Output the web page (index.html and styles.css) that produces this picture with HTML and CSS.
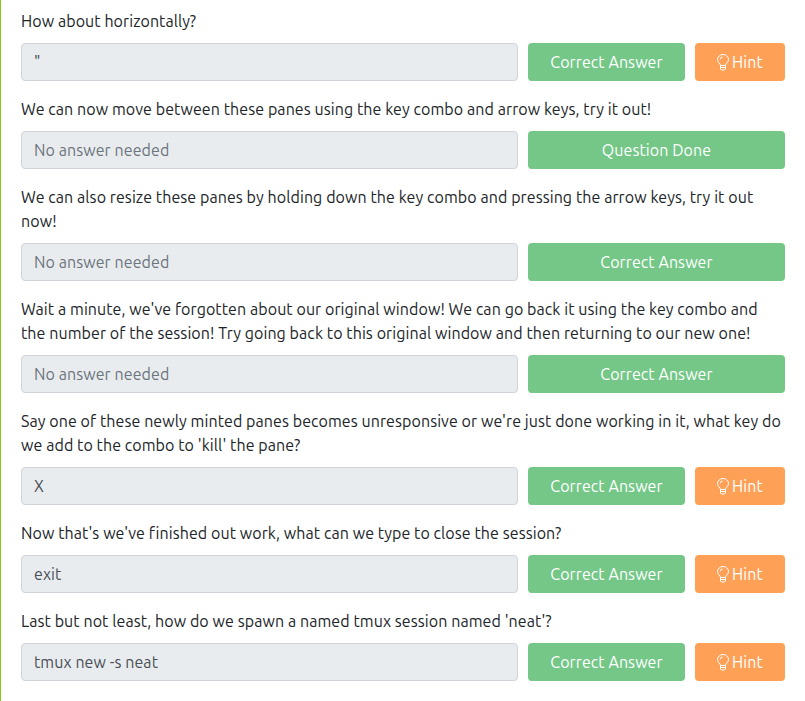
FILE: index.html
```
<!DOCTYPE html>
<html lang="en">
<head>
    <meta charset="UTF-8">
    <meta name="viewport" content="width=device-width, initial-scale=1.0">
    <title>tmux</title>
    <link rel="stylesheet" href="styles.css">
</head>
<body>
    <!-- Shared lightbulb icon -->
    <svg class="icon-defs" width="0" height="0">
        <symbol id="bulb" viewBox="0 0 12 17">
            <path d="M3.5 11.5C3.5 9.4.5 8.4.5 5.5a5.5 5 0 0 1 11 0c0 2.900-3 3.900-3 6z"/>
            <path d="M3 5.5a2.900 2.500 0 0 1 2.900-2.500M3.500 13.500h5M3.500 11.500v3.500l1 1h3l1-1v-3.500"/>
        </symbol>
    </svg>

    <div class="task">
        <div class="question">
            <p class="question-text">How about horizontally?</p>
            <div class="answer-row">
                <input type="text" class="answer" value='"' disabled>
                <button class="btn btn-correct">Correct Answer</button>
                <button class="btn btn-hint"><svg class="bulb"><use href="#bulb"/></svg>Hint</button>
            </div>
        </div>

        <div class="question">
            <p class="question-text">We can now move between these panes using the key combo and arrow keys, try it out!</p>
            <div class="answer-row">
                <input type="text" class="answer" placeholder="No answer needed" disabled>
                <button class="btn btn-correct btn-wide">Question Done</button>
            </div>
        </div>

        <div class="question">
            <p class="question-text">We can also resize these panes by holding down the key combo and pressing the arrow keys, try it out<br>now!</p>
            <div class="answer-row">
                <input type="text" class="answer" placeholder="No answer needed" disabled>
                <button class="btn btn-correct btn-wide">Correct Answer</button>
            </div>
        </div>

        <div class="question">
            <p class="question-text">Wait a minute, we've forgotten about our original window! We can go back it using the key combo and<br>the number of the session! Try going back to this original window and then returning to our new one!</p>
            <div class="answer-row">
                <input type="text" class="answer" placeholder="No answer needed" disabled>
                <button class="btn btn-correct btn-wide">Correct Answer</button>
            </div>
        </div>

        <div class="question">
            <p class="question-text">Say one of these newly minted panes becomes unresponsive or we're just done working in it, what key do<br>we add to the combo to 'kill' the pane?</p>
            <div class="answer-row">
                <input type="text" class="answer" value="X" disabled>
                <button class="btn btn-correct">Correct Answer</button>
                <button class="btn btn-hint"><svg class="bulb"><use href="#bulb"/></svg>Hint</button>
            </div>
        </div>

        <div class="question">
            <p class="question-text">Now that's we've finished out work, what can we type to close the session?</p>
            <div class="answer-row">
                <input type="text" class="answer" value="exit" disabled>
                <button class="btn btn-correct">Correct Answer</button>
                <button class="btn btn-hint"><svg class="bulb"><use href="#bulb"/></svg>Hint</button>
            </div>
        </div>

        <div class="question">
            <p class="question-text">Last but not least, how do we spawn a named tmux session named 'neat'?</p>
            <div class="answer-row">
                <input type="text" class="answer" value="tmux new -s neat" disabled>
                <button class="btn btn-correct">Correct Answer</button>
                <button class="btn btn-hint"><svg class="bulb"><use href="#bulb"/></svg>Hint</button>
            </div>
        </div>
    </div>
</body>
</html>
```
FILE: styles.css
```
* {
    box-sizing: border-box;
}

body {
    margin: 0;
    background-color: #fff;
    color: #212529;
    font-family: Ubuntu, "Noto Sans", sans-serif;
    font-size: 16px;
    line-height: 24px;
    letter-spacing: 0.08px;
}

.icon-defs {
    position: absolute;
}

/* Task body with the green line on the left */
.task {
    min-height: 701px;
    padding: 9px 20px 0;
    border-left: 1px solid #88cc14;
}

.question {
    margin-bottom: 16px;
}

.question-text {
    margin: 0 0 10px;
    white-space: nowrap;
}

.answer-row {
    display: flex;
    gap: 10px;
}

.answer {
    flex: 1;
    min-width: 0;
    height: 38px;
    padding: 6px 12px;
    border: 1px solid #ced4da;
    border-radius: 4px;
    background-color: #e9ecef;
    color: #495057;
    font: inherit;
    letter-spacing: inherit;
}

.answer::placeholder {
    color: #6c757d;
    opacity: 1;
}

/* Buttons */
.btn {
    display: flex;
    align-items: center;
    justify-content: center;
    height: 38px;
    padding: 0;
    border: none;
    border-radius: 4px;
    color: #fff;
    font: inherit;
    letter-spacing: inherit;
}

.btn-correct {
    width: 157px;
    background-color: #74c787;
}

.btn-wide {
    width: 257px;
}

.btn-hint {
    width: 90px;
    background-color: #fea056;
}

.bulb {
    width: 12px;
    height: 17px;
    margin-right: 3px;
    fill: none;
    stroke: #fff;
    stroke-width: 1;
}
```
